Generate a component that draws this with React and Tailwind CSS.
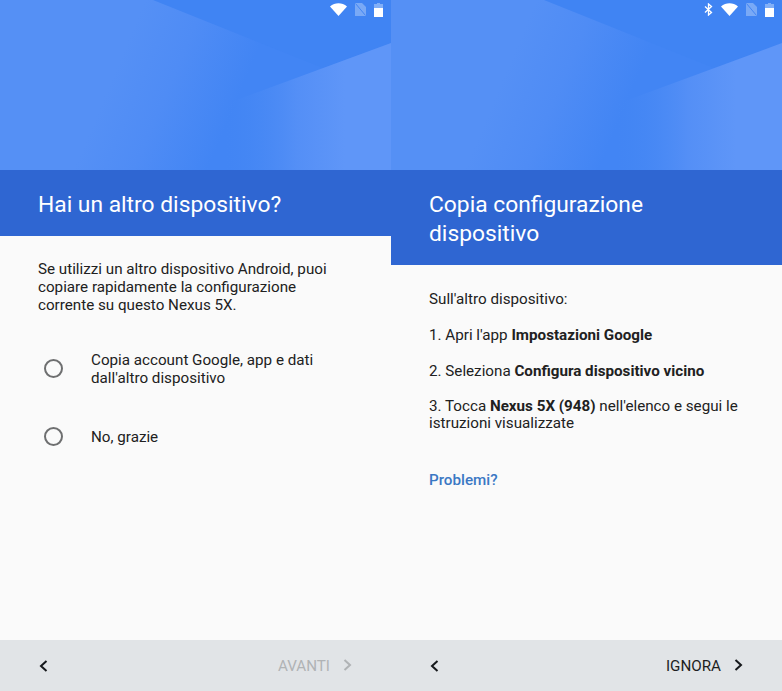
import React from "react";

function Hero({ id }) {
  return (
    <svg className="block w-full h-[170px] shrink-0" viewBox="0 0 391 170" preserveAspectRatio="none">
      <defs>
        <linearGradient id={"base" + id} gradientUnits="userSpaceOnUse" x1="121" y1="57" x2="235" y2="105">
          <stop offset="0" stopColor="#5590f5" />
          <stop offset="0.45" stopColor="#4f8cf5" />
          <stop offset="1" stopColor="#4285f4" />
        </linearGradient>
        <linearGradient id={"low" + id} gradientUnits="userSpaceOnUse" x1="225" y1="120" x2="345" y2="120">
          <stop offset="0" stopColor="#4487f4" stopOpacity="0" />
          <stop offset="0.6" stopColor="#548ff6" />
          <stop offset="1" stopColor="#5f96f8" />
        </linearGradient>
      </defs>
      <rect width="391" height="170" fill={"url(#base" + id + ")"} />
      <polygon points="153,0 391,0 391,43 323,68" fill="#4084f3" />
      <polygon points="391,43 215,108 195,170 391,170" fill={"url(#low" + id + ")"} />
    </svg>
  );
}

function StatusIcons({ bluetooth }) {
  return (
    <div className="absolute top-[2px] right-[8px] flex items-center gap-[8px] h-[15px]">
      {bluetooth && (
        <svg width="9" height="13" viewBox="0 0 9 13" fill="none" stroke="#ffffff" strokeWidth="1.3">
          <path d="M1 3.5 7.5 9.5 4.5 12V1L7.5 3.5 1 9.5" />
        </svg>
      )}
      <svg width="17" height="13" viewBox="0 0 17 13">
        <path d="M0 3.5C5 -0.7 12 -0.7 17 3.5L8.5 13Z" fill="#ffffff" />
      </svg>
      <svg width="11" height="13" viewBox="0 0 11 13">
        <path d="M0 0H7L11 4V13H0Z" fill="#ffffff" fillOpacity="0.3" />
        <path d="M0.5 0.5 10.5 12.5" stroke="#4285f4" strokeWidth="1" />
      </svg>
      <svg width="9" height="14" viewBox="0 0 9 14">
        <path d="M3 0H6V1H9V5H0V1H3Z" fill="#ffffff" fillOpacity="0.35" />
        <rect x="0" y="5" width="9" height="9" fill="#ffffff" />
      </svg>
    </div>
  );
}

function Chevron({ dir, color }) {
  return (
    <svg width="9" height="12" viewBox="0 0 9 12" fill="none" stroke={color} strokeWidth="2">
      <path d={dir === "left" ? "M7.5 1 2 6 7.5 11" : "M1.5 1 7 6 1.5 11"} />
    </svg>
  );
}

function Footer({ label, muted }) {
  return (
    <div className="h-[51px] mt-auto bg-[#e1e4e7] flex items-center justify-between pl-[39px] pr-[39px] shrink-0">
      <Chevron dir="left" color="#15181b" />
      <div className={"flex items-center gap-[13px] text-[15.2px] " + (muted ? "text-[#b0b3b5]" : "text-[#1d1f21]")}>
        <span className="pt-[2px]">{label}</span>
        <Chevron dir="right" color={muted ? "#b0b3b5" : "#15181b"} />
      </div>
    </div>
  );
}

function Radio({ children }) {
  return (
    <div className="flex items-center">
      <div className="w-[19px] h-[19px] rounded-full border-2 border-[#6e6f70] ml-[44px] mr-[28px] shrink-0 -mt-[2px]" />
      <div className="text-[15.2px] leading-[18px] text-[#212121]">{children}</div>
    </div>
  );
}

function Panel({ id, title, band, bluetooth, children, footer }) {
  return (
    <div className="relative w-[391px] h-[691px] flex flex-col bg-[#fafafa]">
      <Hero id={id} />
      <StatusIcons bluetooth={bluetooth} />
      <div className={"bg-[#2f66d2] text-white text-[22.8px] leading-[29px] pl-[38px] pr-[20px] pt-[2px] flex items-center shrink-0 " + band}>
        <div>{title}</div>
      </div>
      {children}
      {footer}
    </div>
  );
}

export default function App() {
  return (
    <div className="w-[782px] h-[691px] flex overflow-hidden font-['Roboto',sans-serif]">
      <Panel
        id="a"
        band="h-[66px]"
        title="Hai un altro dispositivo?"
        footer={<Footer label="AVANTI" muted />}
      >
        <p className="pl-[38px] pr-[50px] pt-[24px] text-[15.2px] leading-[18px] text-[#212121]">
          Se utilizzi un altro dispositivo Android, puoi copiare rapidamente la configurazione corrente su questo Nexus 5X.
        </p>
        <div className="mt-[37px] flex flex-col gap-[41px]">
          <Radio>Copia account Google, app e dati<br />dall'altro dispositivo</Radio>
          <Radio>No, grazie</Radio>
        </div>
      </Panel>
      <Panel
        id="b"
        bluetooth
        band="h-[95px]"
        title={<>Copia configurazione<br />dispositivo</>}
        footer={<Footer label="IGNORA" />}
      >
        <div className="pl-[38px] pr-[30px] pt-[25px] text-[15.2px] leading-[18px] text-[#212121] flex flex-col gap-[18px]">
          <p>Sull'altro dispositivo:</p>
          <p>1. Apri l'app <b className="font-bold">Impostazioni Google</b></p>
          <p>2. Seleziona <b className="font-bold">Configura dispositivo vicino</b></p>
          <p className="leading-[17px]">3. Tocca <b className="font-bold">Nexus 5X (948)</b> nell'elenco e segui le istruzioni visualizzate</p>
        </div>
        <div className="pl-[38px] mt-[39px] text-[15.2px] leading-[18px] font-medium text-[#3a78c4]">Problemi?</div>
      </Panel>
    </div>
  );
}
